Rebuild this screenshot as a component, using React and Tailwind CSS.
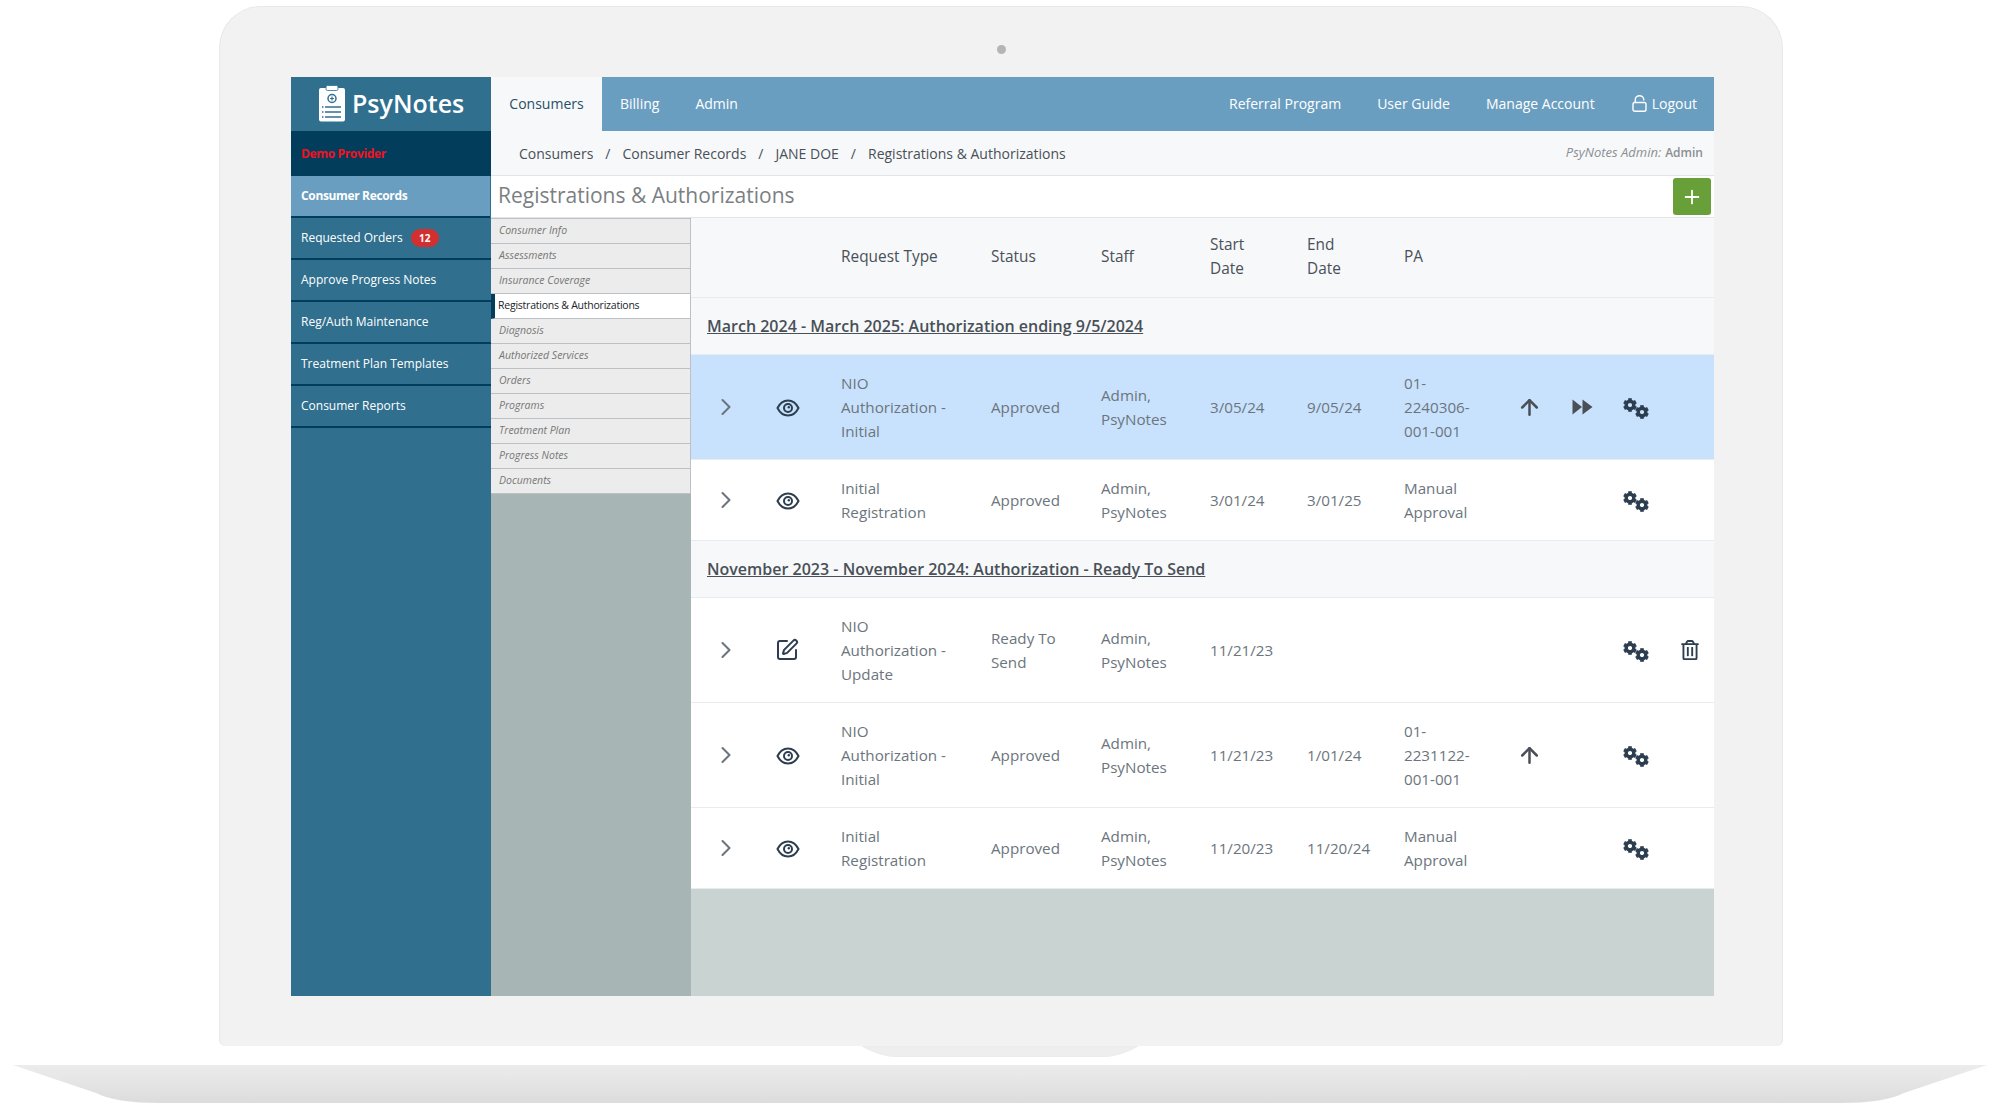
import React from 'react';
import { ChevronRight, ArrowUp, SquarePen, Plus } from 'lucide-react';
import { FaRegTrashAlt } from 'react-icons/fa';

const sideLinks = ['Requested Orders', 'Approve Progress Notes', 'Reg/Auth Maintenance', 'Treatment Plan Templates', 'Consumer Reports'];
const subLinks = ['Consumer Info', 'Assessments', 'Insurance Coverage', 'Registrations & Authorizations', 'Diagnosis', 'Authorized Services', 'Orders', 'Programs', 'Treatment Plan', 'Progress Notes', 'Documents'];

const colClass = 'grid grid-cols-[53px_97px_150px_110px_109px_97px_97px_105px_52px_54px_54px_1fr] items-center';

function Eye() {
  return (
    <svg width="24" height="18" viewBox="0 0 24 18" fill="none" stroke="#2c3e50" strokeWidth="2">
      <path d="M1.5 9C4 4 7.5 1.500 12 1.500S20 4 22.500 9C20 14 16.500 16.500 12 16.500S4 14 1.500 9z" />
      <circle cx="12" cy="9" r="4" />
      <circle cx="12.800" cy="8.200" r="1.200" fill="#2c3e50" stroke="none" />
    </svg>
  );
}

function Cog({ x, y }) {
  const teeth = [0, 60, 120, 180, 240, 300];
  return (
    <g transform={`translate(${x} ${y})`}>
      <circle r="3.800" fill="none" stroke="#2c3e50" strokeWidth="3.400" />
      {teeth.map((t) => (
        <rect key={t} x="-1.800" y="-6.800" width="3.600" height="3" fill="#2c3e50" transform={`rotate(${t})`} />
      ))}
    </g>
  );
}

function Gears() {
  return (
    <svg width="26" height="22" viewBox="0 0 26 22">
      <Cog x={7} y={7} />
      <Cog x={19} y={14} />
    </svg>
  );
}

function Forward() {
  return (
    <svg width="21" height="16" viewBox="0 0 21 16" fill="#4a4f57">
      <path d="M0.500 0.500L10 8 0.500 15.500z" />
      <path d="M10.500 0.500L20.500 8 10.500 15.500z" />
    </svg>
  );
}

function Lock() {
  return (
    <svg width="15" height="17" viewBox="0 0 15 17" fill="none" stroke="#fff" strokeWidth="1.400">
      <rect x="1" y="7.500" width="13" height="8.800" rx="1.800" />
      <path d="M3.300 7.500V4.500a4.200 3.800 0 0 1 8.400 0V5.500" />
    </svg>
  );
}

function Logo() {
  return (
    <svg width="28" height="37" viewBox="0 0 28 37" className="mb-[2px]">
      <rect x="1" y="3" width="26" height="33.500" rx="2" fill="#fff" />
      <rect x="8" y="0.500" width="12" height="5" rx="1.500" fill="#fff" stroke="#306f8e" strokeWidth="0.800" />
      <circle cx="14" cy="13.500" r="4" fill="none" stroke="#306f8e" strokeWidth="1.500" />
      <path d="M14 11.500v4M12 13.500h4" stroke="#306f8e" strokeWidth="1.200" />
      <path d="M7 22h16M7 27h16M7 32h16M4 22h1.500M4 27h1.500M4 32h1.500" stroke="#306f8e" strokeWidth="1.300" />
    </svg>
  );
}

function Row({ type, status, start, end, pa, highlight, tall, edit, up, forward, trash }) {
  return (
    <div className={`${colClass} border-b border-[#e9ecef] ${highlight ? 'bg-[#c8e2fd]' : 'bg-white'} ${tall ? 'h-[105px]' : 'h-[81px]'} text-[15.2px] leading-[24px] text-[#6c757d]`}>
      <div className="pl-[21px]"><ChevronRight size={28} strokeWidth={1.800} color="#6c757d" /></div>
      <div className={`${edit ? 'pl-[31px]' : 'pl-[32px] pt-[2px]'} flex items-center h-[24px]`}>
        {edit ? <SquarePen size={24} strokeWidth={2} color="#2c3e50" /> : <Eye />}
      </div>
      <div>{type.map((t) => <div key={t}>{t}</div>)}</div>
      <div>{status.map((t) => <div key={t}>{t}</div>)}</div>
      <div><div>Admin,</div><div>PsyNotes</div></div>
      <div>{start}</div>
      <div>{end}</div>
      <div>{pa.map((t) => <div key={t}>{t}</div>)}</div>
      <div className="pl-[8px] pt-[1px]">{up && <ArrowUp size={25} strokeWidth={2.400} color="#4a4f57" />}</div>
      <div className="pl-[11px]">{forward && <Forward />}</div>
      <div className="pl-[8px] pt-[3px]"><Gears /></div>
      <div className="pl-[11px]">{trash && <FaRegTrashAlt size={20} color="#2c3e50" />}</div>
    </div>
  );
}

function Section({ children }) {
  return (
    <div className="h-[57px] flex items-center pl-[16px] border-b border-[#e9ecef] bg-[#f7f8fa] text-[16px] font-semibold text-[#495057] underline">
      {children}
    </div>
  );
}

export default function App() {
  return (
    <div className="w-[2000px] h-[1110px] bg-white overflow-hidden flex flex-col font-['Open_Sans',sans-serif]">
      {/* laptop lid */}
      <div className="mt-[6px] ml-[219px] w-[1564px] h-[1040px] shrink-0 bg-[#f2f2f2] border-x border-t border-[#e8e8e8] rounded-t-[42px] rounded-b-[6px] pl-[71px] flex flex-col">
        <div className="h-[70px] flex items-center pl-[700px] shrink-0">
          <div className="w-[9px] h-[9px] rounded-full bg-[#b5b5b5] mt-[14px] ml-[6px]"></div>
        </div>
        <div className="w-[1423px] h-[919px] flex">
          {/* sidebar */}
          <aside className="w-[200px] shrink-0 bg-[#306f8e] flex flex-col">
            <div className="h-[54px] flex items-center pl-[27px] gap-[6px]">
              <Logo />
              <span className="text-[25px] font-semibold text-white">PsyNotes</span>
            </div>
            <div className="h-[45px] bg-[#023e5c] flex items-center pl-[10px] text-[12px] font-bold text-[#f2111f] tracking-[-0.35px]">Demo Provider</div>
            <div className="h-[42px] bg-[#6a9ec0] border-b-2 border-[#023e5c] mr-[1px] flex items-center pl-[10px] text-[12px] font-bold text-white tracking-[-0.35px]">Consumer Records</div>
            {sideLinks.map((l) => (
              <div key={l} className="h-[42px] border-b-2 border-[#023e5c] flex items-center pl-[10px] text-[12px] text-white">
                {l}
                {l === 'Requested Orders' && (
                  <span className="ml-[8px] w-[28px] h-[18px] rounded-full bg-[#d32f2f] text-[10px] font-bold flex items-center justify-center">12</span>
                )}
              </div>
            ))}
          </aside>

          <div className="flex-1 min-w-0 flex flex-col">
            {/* top nav */}
            <header className="h-[54px] bg-[#6a9ec0] flex items-center text-[14px] text-white">
              <div className="w-[111px] h-full pb-[2px] bg-[#f7f8fa] flex items-center justify-center font-medium text-[#274f66]">Consumers</div>
              <span className="ml-[18px] mb-[2px]">Billing</span>
              <span className="ml-[36px] mb-[2px]">Admin</span>
              <span className="ml-auto mb-[2px]">Referral Program</span>
              <span className="ml-[36px] mb-[2px]">User Guide</span>
              <span className="ml-[36px] mb-[2px]">Manage Account</span>
              <span className="ml-[37px] mr-[17px] mb-[2px] flex items-center gap-[5px]"><Lock />Logout</span>
            </header>

            {/* breadcrumb */}
            <div className="h-[45px] bg-[#f7f8fa] border-b border-[#e2e4e7] flex items-center pl-[28px] pr-[11px] text-[14px] text-[#495057]">
              <span>Consumers</span>
              <span className="mx-[12px]">/</span>
              <span>Consumer Records</span>
              <span className="mx-[12px]">/</span>
              <span>JANE DOE</span>
              <span className="mx-[12px]">/</span>
              <span>Registrations &amp; Authorizations</span>
              <span className="ml-auto text-[13px] italic text-[#8a8f94]">PsyNotes Admin:</span>
              <span className="ml-[4px] text-[12px] font-semibold text-[#8a8f94]">Admin</span>
            </div>

            {/* title */}
            <div className="h-[42px] bg-white border-b border-[#e2e4e7] flex items-center justify-between pl-[7px] pr-[3px]">
              <h1 className="text-[21px] mb-[2px] text-[#7b7f83]">Registrations &amp; Authorizations</h1>
              <button className="w-[38px] h-[37px] rounded-[3px] bg-[#689f38] flex items-center justify-center">
                <Plus size={22} strokeWidth={2} color="#fff" />
              </button>
            </div>

            <div className="flex-1 flex min-h-0">
              {/* record tabs */}
              <nav className="w-[200px] shrink-0 bg-[#a7b5b4] flex flex-col">
                <div className="h-[1px] mr-[1px] bg-[#bdc1c6]"></div>
                {subLinks.map((l) => {
                  const active = l === 'Registrations & Authorizations';
                  return (
                    <div key={l} className={`h-[25px] border-b border-r border-[#bdc1c6] flex items-center text-[10.5px] ${active ? 'bg-white text-[#212529] border-l-4 border-l-[#023e5c] pl-[3px] tracking-[-0.23px]' : 'bg-[#ececec] text-[#777] italic pl-[8px]'}`}>
                      {l}
                    </div>
                  );
                })}
              </nav>

              {/* table */}
              <div className="flex-1 min-w-0 bg-[#c9d3d2]">
                <div className={`${colClass} h-[80px] pb-[2px] bg-[#f7f8fa] border-b border-[#e9ecef] text-[15.4px] font-medium leading-[24px] text-[#495057]`}>
                  <div></div>
                  <div></div>
                  <div>Request Type</div>
                  <div>Status</div>
                  <div>Staff</div>
                  <div><div>Start</div><div>Date</div></div>
                  <div><div>End</div><div>Date</div></div>
                  <div>PA</div>
                </div>
                <Section>March 2024 - March 2025: Authorization ending 9/5/2024</Section>
                <Row highlight tall type={['NIO', 'Authorization -', 'Initial']} status={['Approved']} start="3/05/24" end="9/05/24" pa={['01-', '2240306-', '001-001']} up forward />
                <Row type={['Initial', 'Registration']} status={['Approved']} start="3/01/24" end="3/01/25" pa={['Manual', 'Approval']} />
                <Section>November 2023 - November 2024: Authorization - Ready To Send</Section>
                <Row tall edit trash type={['NIO', 'Authorization -', 'Update']} status={['Ready To', 'Send']} start="11/21/23" end="" pa={[]} />
                <Row tall type={['NIO', 'Authorization -', 'Initial']} status={['Approved']} start="11/21/23" end="1/01/24" pa={['01-', '2231122-', '001-001']} up />
                <Row type={['Initial', 'Registration']} status={['Approved']} start="11/20/23" end="11/20/24" pa={['Manual', 'Approval']} />
              </div>
            </div>
          </div>
        </div>
      </div>

      {/* notch */}
      <div className="h-[19px] shrink-0 flex justify-center items-start">
        <svg width="276" height="11" viewBox="0 0 276 11">
          <path d="M0 0C10 6 22 11 40 11H236C254 11 266 6 276 0z" fill="#eeeeee" stroke="#e4e4e4" strokeWidth="0.500" />
        </svg>
      </div>

      {/* laptop base */}
      <svg width="2000" height="38" viewBox="0 0 2000 38" className="shrink-0">
        <defs>
          <linearGradient id="baseFill" x1="0" y1="0" x2="0" y2="1">
            <stop offset="0" stopColor="#ececec" />
            <stop offset="1" stopColor="#dcdcdc" />
          </linearGradient>
        </defs>
        <path d="M13 0H1987L1904 28Q1885 38 1840 38H160Q115 38 96 28z" fill="url(#baseFill)" />
      </svg>
    </div>
  );
}
